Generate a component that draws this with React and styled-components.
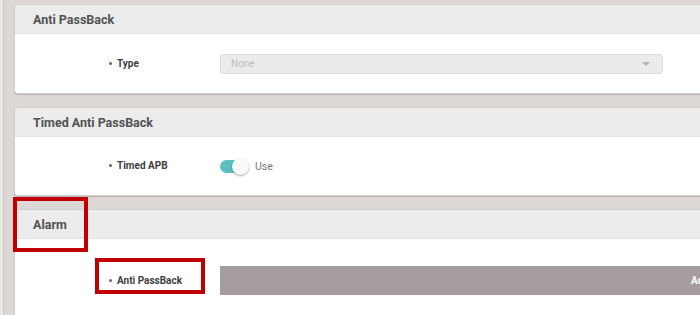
import React from "react";
import styled, { createGlobalStyle } from "styled-components";

const Global = createGlobalStyle`
  html, body { margin: 0; padding: 0; }
  body {
    background: #ddd8d5;
    font-family: Roboto, "Liberation Sans", Arial, sans-serif;
    overflow: hidden;
    width: 700px;
    height: 315px;
  }
`;

const Page = styled.div`
  position: relative;
  display: flex;
  height: 315px;
  overflow: hidden;
`;

const Rail = styled.div`
  width: 3px;
  flex: 0 0 3px;
  background: #ebe9e8;
  border-right: 1px solid #c9c5c3;
`;

const Column = styled.div`
  flex: 0 0 720px;
  display: flex;
  flex-direction: column;
  gap: 13px;
  padding: 4px 0 0 10px;
`;

const Card = styled.section`
  flex-shrink: 0;
  background: #fff;
  border: 1px solid #d2cfcd;
  border-radius: 4px;
  box-shadow: 0 1px 1px rgba(0, 0, 0, 0.18);
  overflow: hidden;
`;

const CardHeader = styled.header`
  height: 28px;
  display: flex;
  align-items: center;
  padding-left: 18px;
  background: #ececec;
  border-bottom: 1px solid #e2e2e2;
  font-size: 12.5px;
  font-weight: 700;
  color: #525252;
`;

const Row = styled.div`
  display: flex;
  height: ${(p) => p.$h}px;
  padding-top: ${(p) => p.$pt || 0}px;
  align-items: ${(p) => (p.$top ? "flex-start" : "center")};
`;

const Label = styled.div`
  flex: 0 0 111px;
  padding-left: 94px;
  font-size: 10px;
  font-weight: 700;
  color: #3d3d3d;
  display: flex;
  align-items: center;
  gap: 5px;
  margin-top: ${(p) => p.$mt || 0}px;
  &::before {
    content: "";
    width: 3px;
    height: 3px;
    border-radius: 50%;
    background: #666;
  }
`;

const Select = styled.div`
  width: 443px;
  height: 20px;
  border: 1px solid #dcdcdc;
  border-radius: 3px;
  background: #ebebeb;
  display: flex;
  align-items: center;
  justify-content: space-between;
  padding: 0 10px;
  box-sizing: border-box;
  font-size: 10px;
  color: #bcbcbc;
`;

const Caret = styled.span`
  width: 0;
  height: 0;
  border-left: 4px solid transparent;
  border-right: 4px solid transparent;
  border-top: 4px solid #b5b5b5;
  margin-right: 2px;
`;

const ToggleWrap = styled.div`
  display: flex;
  align-items: center;
  gap: 7px;
  font-size: 10.5px;
  color: #777;
`;

const Track = styled.span`
  position: relative;
  width: 28px;
  height: 13px;
  border-radius: 7px;
  background: #5cbfbf;
  display: inline-block;
`;

const Knob = styled.span`
  position: absolute;
  right: -1px;
  top: -2px;
  width: 17px;
  height: 17px;
  border-radius: 50%;
  background: #fafafa;
  box-shadow: 0 1px 2px rgba(0, 0, 0, 0.35);
`;

const ActionBar = styled.div`
  flex: 0 0 960px;
  height: 29px;
  background: #a59d9f;
  color: #fff;
  font-size: 10px;
  font-weight: 700;
  display: flex;
  align-items: center;
  justify-content: center;
`;

const Mark = styled.div`
  position: absolute;
  border: 4px solid #c00000;
  box-sizing: border-box;
  left: ${(p) => p.$x}px;
  top: ${(p) => p.$y}px;
  width: ${(p) => p.$w}px;
  height: ${(p) => p.$h}px;
  pointer-events: none;
`;

export default function App() {
  return (
    <>
      <Global />
      <Page>
        <Rail />
        <Column>
          <Card>
            <CardHeader>Anti PassBack</CardHeader>
            <Row $h={59}>
              <Label>Type</Label>
              <Select>
                <span>None</span>
                <Caret />
              </Select>
            </Row>
          </Card>
          <Card>
            <CardHeader>Timed Anti PassBack</CardHeader>
            <Row $h={58}>
              <Label $mt={-2}>Timed APB</Label>
              <ToggleWrap>
                <Track>
                  <Knob />
                </Track>
                <span>Use</span>
              </ToggleWrap>
            </Row>
          </Card>
          <Card>
            <CardHeader>Alarm</CardHeader>
            <Row $h={75} $pt={27} $top>
              <Label $mt={9}>Anti PassBack</Label>
              <ActionBar>Add</ActionBar>
            </Row>
          </Card>
        </Column>
        <Mark $x={13} $y={197} $w={75} $h={55} />
        <Mark $x={95} $y={258} $w={110} $h={36} />
      </Page>
    </>
  );
}
